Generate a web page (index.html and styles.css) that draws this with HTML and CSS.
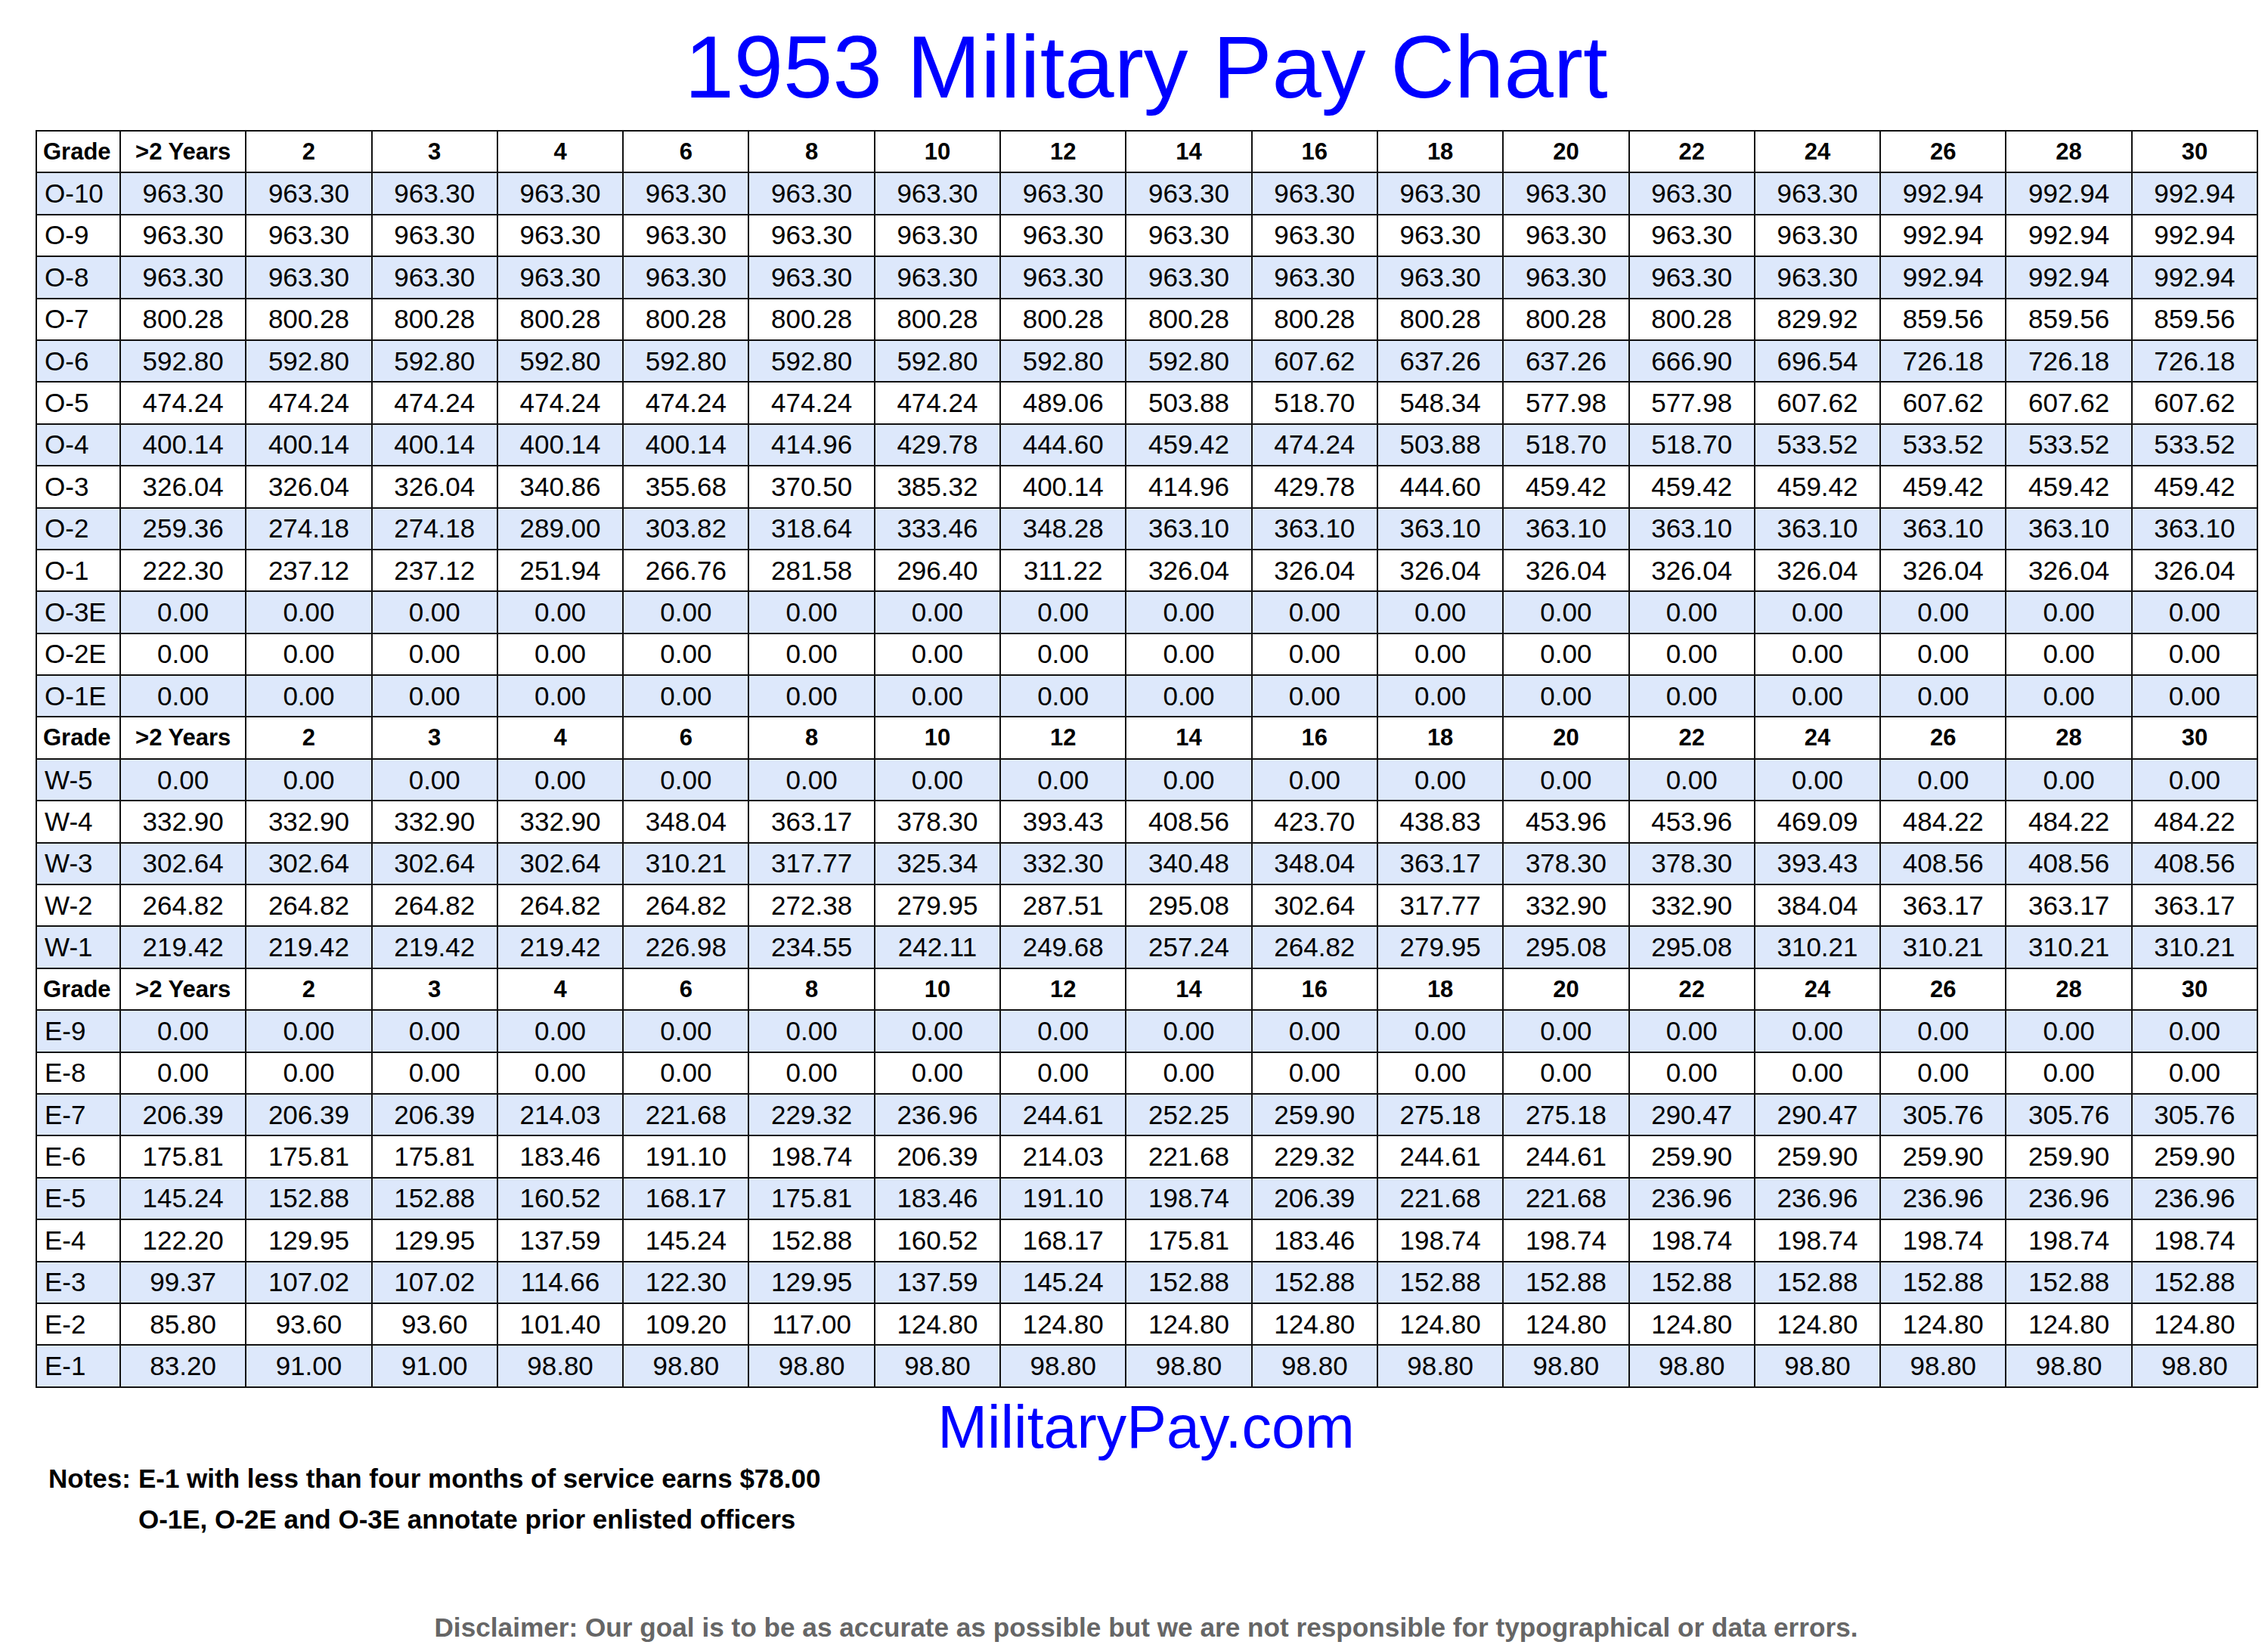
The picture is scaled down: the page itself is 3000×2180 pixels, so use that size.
FILE: index.html
```html
<!DOCTYPE html>
<html lang="en">
<head>
<meta charset="utf-8">
<title>1953 Military Pay Chart</title>
<link rel="stylesheet" href="styles.css">
</head>
<body>
<div class="page">
<h1 class="title">1953 Military Pay Chart</h1>
<table class="pay">
<colgroup><col class="c-grade"><col span="17" class="c-val"></colgroup>
<tbody>
<tr class="hd"><td>Grade<td>&gt;2 Years<td>2<td>3<td>4<td>6<td>8<td>10<td>12<td>14<td>16<td>18<td>20<td>22<td>24<td>26<td>28<td>30</tr>
<tr class="b"><td>O-10<td>963.30<td>963.30<td>963.30<td>963.30<td>963.30<td>963.30<td>963.30<td>963.30<td>963.30<td>963.30<td>963.30<td>963.30<td>963.30<td>963.30<td>992.94<td>992.94<td>992.94</tr>
<tr><td>O-9<td>963.30<td>963.30<td>963.30<td>963.30<td>963.30<td>963.30<td>963.30<td>963.30<td>963.30<td>963.30<td>963.30<td>963.30<td>963.30<td>963.30<td>992.94<td>992.94<td>992.94</tr>
<tr class="b"><td>O-8<td>963.30<td>963.30<td>963.30<td>963.30<td>963.30<td>963.30<td>963.30<td>963.30<td>963.30<td>963.30<td>963.30<td>963.30<td>963.30<td>963.30<td>992.94<td>992.94<td>992.94</tr>
<tr><td>O-7<td>800.28<td>800.28<td>800.28<td>800.28<td>800.28<td>800.28<td>800.28<td>800.28<td>800.28<td>800.28<td>800.28<td>800.28<td>800.28<td>829.92<td>859.56<td>859.56<td>859.56</tr>
<tr class="b"><td>O-6<td>592.80<td>592.80<td>592.80<td>592.80<td>592.80<td>592.80<td>592.80<td>592.80<td>592.80<td>607.62<td>637.26<td>637.26<td>666.90<td>696.54<td>726.18<td>726.18<td>726.18</tr>
<tr><td>O-5<td>474.24<td>474.24<td>474.24<td>474.24<td>474.24<td>474.24<td>474.24<td>489.06<td>503.88<td>518.70<td>548.34<td>577.98<td>577.98<td>607.62<td>607.62<td>607.62<td>607.62</tr>
<tr class="b"><td>O-4<td>400.14<td>400.14<td>400.14<td>400.14<td>400.14<td>414.96<td>429.78<td>444.60<td>459.42<td>474.24<td>503.88<td>518.70<td>518.70<td>533.52<td>533.52<td>533.52<td>533.52</tr>
<tr><td>O-3<td>326.04<td>326.04<td>326.04<td>340.86<td>355.68<td>370.50<td>385.32<td>400.14<td>414.96<td>429.78<td>444.60<td>459.42<td>459.42<td>459.42<td>459.42<td>459.42<td>459.42</tr>
<tr class="b"><td>O-2<td>259.36<td>274.18<td>274.18<td>289.00<td>303.82<td>318.64<td>333.46<td>348.28<td>363.10<td>363.10<td>363.10<td>363.10<td>363.10<td>363.10<td>363.10<td>363.10<td>363.10</tr>
<tr><td>O-1<td>222.30<td>237.12<td>237.12<td>251.94<td>266.76<td>281.58<td>296.40<td>311.22<td>326.04<td>326.04<td>326.04<td>326.04<td>326.04<td>326.04<td>326.04<td>326.04<td>326.04</tr>
<tr class="b"><td>O-3E<td>0.00<td>0.00<td>0.00<td>0.00<td>0.00<td>0.00<td>0.00<td>0.00<td>0.00<td>0.00<td>0.00<td>0.00<td>0.00<td>0.00<td>0.00<td>0.00<td>0.00</tr>
<tr><td>O-2E<td>0.00<td>0.00<td>0.00<td>0.00<td>0.00<td>0.00<td>0.00<td>0.00<td>0.00<td>0.00<td>0.00<td>0.00<td>0.00<td>0.00<td>0.00<td>0.00<td>0.00</tr>
<tr class="b"><td>O-1E<td>0.00<td>0.00<td>0.00<td>0.00<td>0.00<td>0.00<td>0.00<td>0.00<td>0.00<td>0.00<td>0.00<td>0.00<td>0.00<td>0.00<td>0.00<td>0.00<td>0.00</tr>
<tr class="hd"><td>Grade<td>&gt;2 Years<td>2<td>3<td>4<td>6<td>8<td>10<td>12<td>14<td>16<td>18<td>20<td>22<td>24<td>26<td>28<td>30</tr>
<tr class="b"><td>W-5<td>0.00<td>0.00<td>0.00<td>0.00<td>0.00<td>0.00<td>0.00<td>0.00<td>0.00<td>0.00<td>0.00<td>0.00<td>0.00<td>0.00<td>0.00<td>0.00<td>0.00</tr>
<tr><td>W-4<td>332.90<td>332.90<td>332.90<td>332.90<td>348.04<td>363.17<td>378.30<td>393.43<td>408.56<td>423.70<td>438.83<td>453.96<td>453.96<td>469.09<td>484.22<td>484.22<td>484.22</tr>
<tr class="b"><td>W-3<td>302.64<td>302.64<td>302.64<td>302.64<td>310.21<td>317.77<td>325.34<td>332.30<td>340.48<td>348.04<td>363.17<td>378.30<td>378.30<td>393.43<td>408.56<td>408.56<td>408.56</tr>
<tr><td>W-2<td>264.82<td>264.82<td>264.82<td>264.82<td>264.82<td>272.38<td>279.95<td>287.51<td>295.08<td>302.64<td>317.77<td>332.90<td>332.90<td>384.04<td>363.17<td>363.17<td>363.17</tr>
<tr class="b"><td>W-1<td>219.42<td>219.42<td>219.42<td>219.42<td>226.98<td>234.55<td>242.11<td>249.68<td>257.24<td>264.82<td>279.95<td>295.08<td>295.08<td>310.21<td>310.21<td>310.21<td>310.21</tr>
<tr class="hd"><td>Grade<td>&gt;2 Years<td>2<td>3<td>4<td>6<td>8<td>10<td>12<td>14<td>16<td>18<td>20<td>22<td>24<td>26<td>28<td>30</tr>
<tr class="b"><td>E-9<td>0.00<td>0.00<td>0.00<td>0.00<td>0.00<td>0.00<td>0.00<td>0.00<td>0.00<td>0.00<td>0.00<td>0.00<td>0.00<td>0.00<td>0.00<td>0.00<td>0.00</tr>
<tr><td>E-8<td>0.00<td>0.00<td>0.00<td>0.00<td>0.00<td>0.00<td>0.00<td>0.00<td>0.00<td>0.00<td>0.00<td>0.00<td>0.00<td>0.00<td>0.00<td>0.00<td>0.00</tr>
<tr class="b"><td>E-7<td>206.39<td>206.39<td>206.39<td>214.03<td>221.68<td>229.32<td>236.96<td>244.61<td>252.25<td>259.90<td>275.18<td>275.18<td>290.47<td>290.47<td>305.76<td>305.76<td>305.76</tr>
<tr><td>E-6<td>175.81<td>175.81<td>175.81<td>183.46<td>191.10<td>198.74<td>206.39<td>214.03<td>221.68<td>229.32<td>244.61<td>244.61<td>259.90<td>259.90<td>259.90<td>259.90<td>259.90</tr>
<tr class="b"><td>E-5<td>145.24<td>152.88<td>152.88<td>160.52<td>168.17<td>175.81<td>183.46<td>191.10<td>198.74<td>206.39<td>221.68<td>221.68<td>236.96<td>236.96<td>236.96<td>236.96<td>236.96</tr>
<tr><td>E-4<td>122.20<td>129.95<td>129.95<td>137.59<td>145.24<td>152.88<td>160.52<td>168.17<td>175.81<td>183.46<td>198.74<td>198.74<td>198.74<td>198.74<td>198.74<td>198.74<td>198.74</tr>
<tr class="b"><td>E-3<td>99.37<td>107.02<td>107.02<td>114.66<td>122.30<td>129.95<td>137.59<td>145.24<td>152.88<td>152.88<td>152.88<td>152.88<td>152.88<td>152.88<td>152.88<td>152.88<td>152.88</tr>
<tr><td>E-2<td>85.80<td>93.60<td>93.60<td>101.40<td>109.20<td>117.00<td>124.80<td>124.80<td>124.80<td>124.80<td>124.80<td>124.80<td>124.80<td>124.80<td>124.80<td>124.80<td>124.80</tr>
<tr class="b"><td>E-1<td>83.20<td>91.00<td>91.00<td>98.80<td>98.80<td>98.80<td>98.80<td>98.80<td>98.80<td>98.80<td>98.80<td>98.80<td>98.80<td>98.80<td>98.80<td>98.80<td>98.80</tr>
</tbody>
</table>
<div class="site">MilitaryPay.com</div>
<div class="notes">
<span class="notes-label">Notes:</span>
<div class="notes-lines">
<div>E-1 with less than four months of service earns $78.00</div>
<div>O-1E, O-2E and O-3E annotate prior enlisted officers</div>
</div>
</div>
<div class="disclaimer">Disclaimer: Our goal is to be as accurate as possible but we are not responsible for typographical or data errors.</div>
</div>
</body>
</html>
```
FILE: styles.css
```css
html, body {
  margin: 0;
  padding: 0;
  background: #ffffff;
}
body {
  font-family: "Liberation Sans", Arial, Helvetica, sans-serif;
  color: #000000;
}
.page {
  width: 2938px;
  margin-left: 47px;
}
.title {
  margin: 31px 0 25px;
  font-size: 117.5px;
  line-height: 116px;
  font-weight: normal;
  color: #0000ff;
  text-align: center;
}
.pay {
  width: 2938px;
  table-layout: fixed;
  border-collapse: collapse;
  border: 2px solid #000;
}
.c-grade { width: 111px; }
.c-val { width: 166.3px; }
.pay td {
  border: 2px solid #111;
  height: 53.4px;
  padding: 0;
  font-size: 35px;
  line-height: 40px;
  text-align: center;
  vertical-align: middle;
  white-space: nowrap;
}
.pay td:first-child {
  text-align: left;
  padding-left: 10px;
}
.pay tr.b td { background: #dde8fb; }
.pay tr.hd td {
  font-weight: bold;
  font-size: 31px;
}
.pay tr.hd td:first-child { padding-left: 8px; }
.site {
  margin-top: 12px;
  font-size: 79px;
  line-height: 79px;
  color: #0000ff;
  text-align: center;
}
.notes {
  margin-top: 2px;
  padding-left: 17px;
  display: flex;
  gap: 10px;
  font-weight: bold;
  font-size: 35px;
  line-height: 54px;
}
.disclaimer {
  margin-top: 96px;
  font-weight: bold;
  font-size: 35.2px;
  line-height: 40px;
  color: #666666;
  text-align: center;
}
```
